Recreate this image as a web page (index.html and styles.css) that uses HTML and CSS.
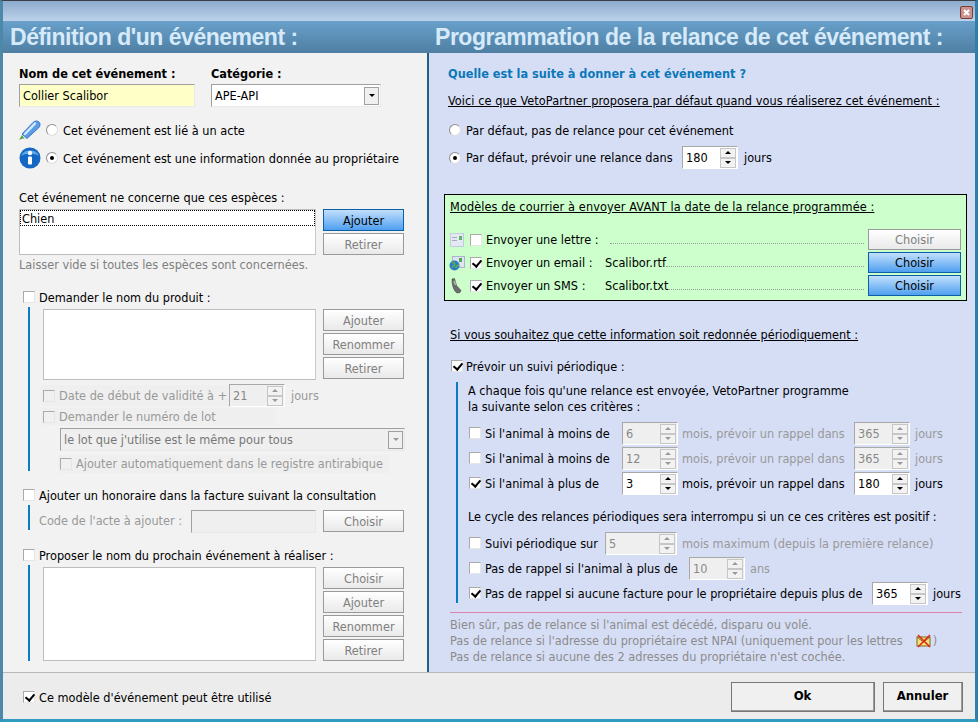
FILE: index.html
```html
<!DOCTYPE html>
<html lang="fr">
<head>
<meta charset="utf-8">
<title>Définition d'un événement</title>
<link rel="stylesheet" href="styles.css">
</head>
<body>
<div class="window">
  <div class="titlebar">
    <button class="close"><svg viewBox="0 0 13 13" width="13" height="13"><rect x=".5" y=".5" width="12" height="12" rx="1.5" fill="#c9938f" stroke="#7d3b38"/><path d="M4 4l5 5M9 4l-5 5" stroke="#fff" stroke-width="2"/></svg></button>
  </div>
  <div class="heads">
    <h1 class="head-left">Définition d'un événement :</h1>
    <h1 class="head-right">Programmation de la relance de cet événement :</h1>
  </div>
  <div class="panels">
    <section class="left">
      <div class="name-grid">
        <div class="field">
          <label class="bold">Nom de cet événement :</label>
          <div class="input yellow">Collier Scalibor</div>
        </div>
        <div class="field">
          <label class="bold">Catégorie :</label>
          <div class="input select">APE-API<span class="drop"><i class="dn"></i></span></div>
        </div>
      </div>

      <div class="row kind first-kind">
        <svg class="kind-icon" viewBox="0 0 22 20"><path d="M0 20l2-1 3-1-2-3-1 2z" fill="#3d9a35"/><path d="M3 14L14 2.500c2-2 4.500-2 6-.5s1.500 4-.5 6L8 18.500z" fill="#5b9ce6" stroke="#2a67b5" stroke-width=".8"/><path d="M6 14L16 3.500" stroke="#d5e9ff" stroke-width="2.500" stroke-linecap="round"/><path d="M3.500 16l2.500 2.500-2.500 .5z" fill="#7cc267"/></svg>
        <span class="radio"></span><span class="txt">Cet événement est lié à un acte</span>
      </div>
      <div class="row kind">
        <svg class="kind-icon" viewBox="0 0 22 22"><circle cx="11" cy="11" r="10.500" fill="#1468c4"/><path d="M2 9a9.500 8 0 0 1 18 0c-4-3-14-3-18 0z" fill="#5aa6ea"/><circle cx="11" cy="6" r="2.200" fill="#fff"/><rect x="9" y="9.500" width="4" height="8" rx="1" fill="#fff"/></svg>
        <span class="radio on"></span><span class="txt">Cet événement est une information donnée au propriétaire</span>
      </div>

      <div class="species-label">Cet événement ne concerne que ces espèces :</div>
      <div class="list-block species">
        <div class="list"><div class="list-item">Chien</div></div>
        <div class="btns">
          <button class="btn blue">Ajouter</button>
          <button class="btn">Retirer</button>
        </div>
      </div>
      <div class="hint">Laisser vide si toutes les espèces sont concernées.</div>

      <div class="row chk section-head demand"><span class="cb"></span><span class="txt">Demander le nom du produit :</span></div>
      <div class="bar bar-product">
        <div class="list-block">
          <div class="list product"></div>
          <div class="btns">
            <button class="btn">Ajouter</button>
            <button class="btn">Renommer</button>
            <button class="btn">Retirer</button>
          </div>
        </div>
        <div class="row date-row">
          <div class="row chk patch date-patch muted"><span class="cb"></span><span>Date de début de validité à +</span></div>
          <div class="spin off"><span class="val">21</span><span class="arrows"><b><i class="up"></i></b><b><i class="dn"></i></b></span></div>
          <span class="muted after">jours</span>
        </div>
        <div class="row chk patch lot-patch muted"><span class="cb"></span><span>Demander le numéro de lot</span></div>
        <div class="input select off lot">le lot que j'utilise est le même pour tous<span class="drop"><i class="dn"></i></span></div>
        <div class="row chk patch auto-patch muted"><span class="cb"></span><span>Ajouter automatiquement dans le registre antirabique</span></div>
      </div>

      <div class="row chk section-head honor"><span class="cb"></span><span class="txt">Ajouter un honoraire dans la facture suivant la consultation</span></div>
      <div class="bar bar-honor">
        <div class="code-row">
          <span class="muted">Code de l'acte à ajouter :</span>
          <div class="input off"></div>
          <button class="btn">Choisir</button>
        </div>
      </div>

      <div class="row chk section-head next"><span class="cb"></span><span class="txt">Proposer le nom du prochain événement à réaliser :</span></div>
      <div class="bar bar-next">
        <div class="list-block">
          <div class="list tall"></div>
          <div class="btns">
            <button class="btn">Choisir</button>
            <button class="btn">Ajouter</button>
            <button class="btn">Renommer</button>
            <button class="btn">Retirer</button>
          </div>
        </div>
      </div>
    </section>

    <section class="right">
      <div class="bold question">Quelle est la suite à donner à cet événement ?</div>
      <div class="under voici">Voici ce que VetoPartner proposera par défaut quand vous réaliserez cet événement :</div>
      <div class="row radio-row r1"><span class="radio"></span><span class="txt">Par défaut, pas de relance pour cet événement</span></div>
      <div class="row radio-row r2">
        <span class="radio on"></span>
        <span class="w-relance">Par défaut, prévoir une relance dans</span>
        <div class="spin"><span class="val">180</span><span class="arrows"><b><i class="up"></i></b><b><i class="dn"></i></b></span></div>
        <span class="r2-after">jours</span>
      </div>

      <div class="green">
        <div class="under green-title">Modèles de courrier à envoyer AVANT la date de la relance programmée :</div>
        <div class="mail-rows">
          <div class="mail">
            <svg class="mail-icon" viewBox="0 0 16 16"><rect x="1.500" y="1.500" width="13" height="13" fill="#e4e8f2" stroke="#c3cbdc"/><rect x="3" y="5" width="5" height="1" fill="#aab"/><rect x="3" y="8" width="5" height="1" fill="#aab"/><rect x="10" y="4" width="3" height="4" fill="#5db56a"/></svg>
            <span class="cb"></span>
            <span class="mail-label">Envoyer une lettre :</span>
            <span class="file"></span><span class="leader"></span>
            <button class="btn small">Choisir</button>
          </div>
          <div class="mail">
            <svg class="mail-icon" viewBox="0 0 16 16"><rect x="3.500" y="1.500" width="12" height="11" fill="#dfe4ef" stroke="#aab4ca"/><rect x="10" y="3" width="3" height="4" fill="#4aa85a"/><circle cx="5.500" cy="10.500" r="5" fill="#2d7cc4"/><path d="M3 7.500c2 0 3 1 2.500 2.500s-2 1-2.500 2.500M7 13c0-2 1-2.500 3-3" stroke="#5cb04c" stroke-width="1.600" fill="none"/></svg>
            <span class="cb on"></span>
            <span class="mail-label">Envoyer un email :</span>
            <span class="file">Scalibor.rtf</span><span class="leader"></span>
            <button class="btn small blue">Choisir</button>
          </div>
          <div class="mail">
            <svg class="mail-icon" viewBox="0 0 16 16"><path d="M3 1l2.500-.5 2 7 4.500 5-1 2-3 .5C5 13 3 8 3 1z" fill="#6d6d6d" stroke="#444" stroke-width=".6"/><path d="M4.500 3l1.500-.3 1 4-1.200.5z" fill="#b9c4b8"/></svg>
            <span class="cb on"></span>
            <span class="mail-label">Envoyer un SMS :</span>
            <span class="file">Scalibor.txt</span><span class="leader"></span>
            <button class="btn small blue">Choisir</button>
          </div>
        </div>
      </div>

      <div class="under souhait">Si vous souhaitez que cette information soit redonnée périodiquement :</div>
      <div class="row suivi"><span class="cb on"></span><span class="txt">Prévoir un suivi périodique :</span></div>

      <div class="bar bar-suivi">
        <p class="para">A chaque fois qu'une relance est envoyée, VetoPartner programme<br>la suivante selon ces critères :</p>
        <div class="crit-rows">
          <div class="crit">
            <span class="cb"></span><span class="w-age">Si l'animal à moins de</span>
            <div class="spin off"><span class="val">6</span><span class="arrows"><b><i class="up"></i></b><b><i class="dn"></i></b></span></div>
            <span class="muted w-mois">mois, prévoir un rappel dans</span>
            <div class="spin off"><span class="val">365</span><span class="arrows"><b><i class="up"></i></b><b><i class="dn"></i></b></span></div>
            <span class="muted">jours</span>
          </div>
          <div class="crit">
            <span class="cb"></span><span class="w-age">Si l'animal à moins de</span>
            <div class="spin off"><span class="val">12</span><span class="arrows"><b><i class="up"></i></b><b><i class="dn"></i></b></span></div>
            <span class="muted w-mois">mois, prévoir un rappel dans</span>
            <div class="spin off"><span class="val">365</span><span class="arrows"><b><i class="up"></i></b><b><i class="dn"></i></b></span></div>
            <span class="muted">jours</span>
          </div>
          <div class="crit">
            <span class="cb on"></span><span class="w-age">Si l'animal à plus de</span>
            <div class="spin"><span class="val">3</span><span class="arrows"><b><i class="up"></i></b><b><i class="dn"></i></b></span></div>
            <span class="w-mois">mois, prévoir un rappel dans</span>
            <div class="spin"><span class="val">180</span><span class="arrows"><b><i class="up"></i></b><b><i class="dn"></i></b></span></div>
            <span>jours</span>
          </div>
        </div>
        <p class="para cycle">Le cycle des relances périodiques sera interrompu si un ce ces critères est positif :</p>
        <div class="crit-rows">
          <div class="crit">
            <span class="cb"></span><span class="w-suivi">Suivi périodique sur</span>
            <div class="spin off wide"><span class="val">5</span><span class="arrows"><b><i class="up"></i></b><b><i class="dn"></i></b></span></div>
            <span class="muted">mois maximum (depuis la première relance)</span>
          </div>
          <div class="crit">
            <span class="cb"></span><span class="w-pas">Pas de rappel si l'animal à plus de</span>
            <div class="spin off"><span class="val">10</span><span class="arrows"><b><i class="up"></i></b><b><i class="dn"></i></b></span></div>
            <span class="muted ans">ans</span>
          </div>
          <div class="crit">
            <span class="cb on"></span><span class="w-fact">Pas de rappel si aucune facture pour le propriétaire depuis plus de</span>
            <div class="spin"><span class="val">365</span><span class="arrows"><b><i class="up"></i></b><b><i class="dn"></i></b></span></div>
            <span>jours</span>
          </div>
        </div>
      </div>

      <div class="pink"></div>
      <div class="notes">
        <div>Bien sûr, pas de relance si l'animal est décédé, disparu ou volé.</div>
        <div class="row">Pas de relance si l'adresse du propriétaire est NPAI (uniquement pour les lettres
          <svg class="npai" viewBox="0 0 16 14"><rect x="1" y="3" width="13" height="9" fill="#f6e27a" stroke="#7a6a20"/><path d="M1 3l6.500 5L14 3" fill="none" stroke="#7a6a20"/><path d="M2 1l12 12M14 1L2 13" stroke="#e0201a" stroke-width="1.500"/></svg>)
        </div>
        <div>Pas de relance si aucune des 2 adresses du propriétaire n'est cochée.</div>
      </div>
    </section>
  </div>
  <footer class="foot">
    <div class="row chk foot-check"><span class="cb on"></span><span class="txt">Ce modèle d'événement peut être utilisé</span></div>
    <div class="foot-btns">
      <button class="big ok">Ok</button>
      <button class="big cancel">Annuler</button>
    </div>
  </footer>
</div>
</body>
</html>
```
FILE: styles.css
```css
* { box-sizing: border-box; }
html, body { margin: 0; padding: 0; }
body {
  width: 978px; height: 722px; overflow: hidden;
  font: 12.6px/14px "DejaVu Sans Condensed", "DejaVu Sans", sans-serif;
  font-stretch: condensed;
  color: #000;
  background: #2f7fa8;
}
.window {
  width: 978px; height: 722px;
  display: flex; flex-direction: column;
  border-top: 1px solid #3a3f45;
  border-left: 3px solid #4d88a8;
  border-right: 3px solid #2f7fa8;
  border-bottom: 3px solid #2f9cc0;
  background: #ececec;
  white-space: nowrap;
}
.titlebar {
  height: 20px; flex: none;
  display: flex; justify-content: flex-end; align-items: flex-start;
  padding: 5px 2px 0 0;
  background: linear-gradient(#8dabcc, #bcd2ea);
}
.close { width: 13px; height: 13px; padding: 0; border: 0; background: none; display: block; }
.close svg { display: block; }
.heads {
  height: 32px; flex: none;
  display: grid; grid-template-columns: 432px 1fr;
  background: linear-gradient(#68a0ca, #4f7fa3);
}
.heads h1 {
  margin: 0; font: bold 23px/33px "Liberation Sans", Arial, sans-serif;
  color: #d6eafa;
}
.head-left { padding-left: 7px; letter-spacing: -.48px; }
.head-right { padding-left: 0; letter-spacing: -.46px; }

.panels { flex: 1; display: grid; grid-template-columns: 424px 2px 1fr; min-height: 0; }
.left { background: #f2f2f2; padding: 14px 0 0 16px; grid-column: 1; }
.right { background: #d6def6; padding: 14px 0 0 19px; grid-column: 3; border-left: 0; box-shadow: -2px 0 0 #1f5f88; }

.row { display: flex; align-items: center; }
.bold { font-weight: bold; }
.under { text-decoration: underline; }
.muted { color: #999; }
.txt { padding-top: 2px; }

.name-grid { display: grid; grid-template-columns: 176px 170px; column-gap: 16px; }
.field { display: flex; flex-direction: column; gap: 3px; }
.input {
  height: 23px; padding: 0 3px; line-height: 21px;
  border: 1px solid #fff; border-top-color: #a0a0a0; border-left-color: #a0a0a0;
  border-bottom-color: #e9e9e9; border-right-color: #e9e9e9;
  background: #fff; position: relative;
}
.yellow { background: #ffffc8; }
.select { display: flex; align-items: center; justify-content: space-between; padding-right: 1px; }
.drop {
  width: 15px; height: 18px; display: flex; align-items: center; justify-content: center;
  background: #f0f0f0; border: 1px solid #a0a0a0;
}
.input.off { background: #efefef; color: #777; }
.dn, .up { display: block; width: 0; height: 0; border: 3.5px solid transparent; }
.dn { border-top-color: #000; border-bottom-width: 0; }
.up { border-bottom-color: #000; border-top-width: 0; }
.off .dn { border-top-color: #999; }
.off .up { border-bottom-color: #999; }

.kind { height: 22px; margin-top: 6px; gap: 5px; }
.first-kind { margin-top: 12px; }
.kind-icon { width: 22px; height: 22px; flex: none; }
.radio {
  width: 12px; height: 12px; flex: none; border-radius: 50%;
  background: #fff; border: 1px solid #8e8e8e; border-right-color: #ddd; border-bottom-color: #ddd;
  display: flex; align-items: center; justify-content: center;
}
.radio.on::after { content: ""; width: 4px; height: 4px; border-radius: 50%; background: #000; }

.species-label { margin-top: 22px; }
.list-block { display: flex; gap: 7px; }
.species { margin-top: 4px; }
.list {
  width: 297px; height: 46px; background: #fff;
  border: 1px solid #bdbdbd; border-right-color: #c8c8c8;
}
.product { width: 273px; height: 71px; }
.tall { width: 273px; height: 94px; }
.list-item { height: 16px; line-height: 15px; padding-left: 1px; border: 1px dotted #000; }
.btns { width: 81px; display: flex; flex-direction: column; gap: 2px; }
.btn {
  width: 81px; height: 22px; padding: 1px 0 0; font: inherit; font-stretch: condensed;
  color: #808080; background: linear-gradient(#fff, #e9e9e9); border: 1px solid #9a9a9a;
}
.btn.blue { color: #000; background: linear-gradient(#c2e0fc, #4f9ff0); border-color: #0b5fa5; }
.btn.small { width: 93px; height: 21px; flex: none; }
.hint { margin-top: 3px; color: #808080; }

.chk { gap: 4px; }
.cb {
  width: 12px; height: 12px; flex: none; position: relative; background: #fff;
  border: 1px solid #aaa; border-right-color: #e6e6e6; border-bottom-color: #e6e6e6;
}
.cb.on::after {
  content: ""; position: absolute; left: 3px; top: 0; width: 4px; height: 7px;
  border: solid #000; border-width: 0 2px 2px 0; transform: rotate(40deg);
}
.section-head { margin-left: 4px; height: 14px; }
.demand { margin-top: 18px; }
.honor { margin-top: 17px; }
.next { margin-top: 18px; }
.bar { margin-left: 9px; border-left: 2px solid #0a7cc4; }
.bar-product { margin-top: 3px; height: 164px; padding: 2px 0 0 13px; }
.bar-honor { margin-top: 3px; height: 25px; padding: 5px 0 0 9px; }
.bar-next { margin-top: 3px; height: 96px; padding: 2px 0 0 13px; }

.date-row { margin-top: 4px; height: 23px; }
.patch { background: #efefef; }
.patch .cb { background: #f0f0f0; }
.date-patch { width: 188px; height: 21px; margin-left: -2px; padding-left: 2px; }
.after { margin-left: 6px; }
.lot-patch { width: 235px; height: 17px; margin: 1px 0 0 -2px; padding-left: 2px; }
.lot { width: 345px; margin: 3px 0 0 17px; }
.auto-patch { width: 332px; height: 18px; margin: 4px 0 0 15px; padding-left: 2px; }
.code-row { display: grid; grid-template-columns: 152px 125px 81px; column-gap: 0; align-items: start; }
.code-row .muted { line-height: 22px; }
.code-row .btn { margin-left: 7px; }

/* spinners */
.spin {
  width: 56px; height: 23px; flex: none; display: flex; justify-content: space-between; padding: 0 1px 0 3px;
  background: #fff; line-height: 21px; align-items: center;
  border: 1px solid #a8a8a8; border-right-color: #fff; border-bottom-color: #fff;
}
.spin.off { background: #efefef; color: #888; }
.spin.wide { width: 72px; }
.arrows { width: 16px; height: 20px; display: flex; flex-direction: column; gap: 0; }
.arrows b {
  flex: 1; display: flex; align-items: center; justify-content: center;
  background: #f2f2f2; border: 1px solid #c6c6c6;
}

/* right */
.voici { margin-top: 13px; letter-spacing: .07px; }
.question { color: #0a78b8; }
.radio-row { gap: 5px; margin-left: 1px; }
.r1 { margin-top: 15px; height: 14px; }
.r2 { margin-top: 9px; height: 23px; }
.w-relance { width: 211px; }
.r2-after { margin-left: 1px; }
.green {
  width: 523px; height: 107px; margin: 25px 0 0 -4px; padding: 5px 5px 3px 4px;
  background: #ccffcc; border: 1px solid #000;
}
.green-title { padding-left: 1px; letter-spacing: .1px; }
.mail-rows { margin-top: 14px; display: grid; grid-auto-rows: 23px; }
.mail { display: flex; align-items: center; }
.mail-icon { width: 16px; height: 16px; flex: none; }
.mail .cb { margin: 0 4px 0 5px; }
.mail-label { width: 119px; }
.file { min-width: 5px; }
.leader { flex: 1; margin: 0 4px 0 0; height: 8px; border-bottom: 1px dotted #9a9a9a; }
.souhait { margin: 27px 0 0 2px; }
.suivi { margin: 17px 0 0 3px; gap: 3px; height: 14px; }
.bar-suivi { margin: 9px 0 0 8px; height: 221px; width: 515px; padding: 1px 0 0 10px; }
.para { margin: 0; line-height: 16px; }
.cycle { margin-top: 12px; }
.crit-rows { margin-top: 7px; display: grid; grid-auto-rows: 25px; }
.crit { display: flex; align-items: flex-start; padding-left: 1px; line-height: 23px; }
.crit .cb { margin: 5px 4px 0 0; }
.w-age { width: 137px; }
.w-mois { width: 172px; margin-left: 4px; }
.crit .spin + span:last-child { margin-left: 5px; }
.crit .w-mois + .spin + span { margin-left: 5px; }
.w-suivi { width: 120px; }
.w-pas { width: 204px; }
.crit .ans { margin-left: 7px; }
.w-fact { width: 387px; }
.pink { width: 512px; height: 1px; margin: 9px 0 0 2px; background: #e080b0; }
.notes { margin: 4px 0 0 2px; color: #8c8c8c; line-height: 16px; }
.notes .row { gap: 4px; }
.npai { width: 16px; height: 14px; margin: 0 -3px 0 9px; }

.foot {
  height: 47px; flex: none; display: flex; align-items: center; justify-content: space-between;
  padding: 0 12px 0 20px; background: #ececec; border-top: 1px solid #b8b8b8;
}
.foot-check { height: 14px; margin-top: 2px; }
.foot-btns { display: flex; gap: 8px; margin-top: 1px; }
.big {
  height: 30px; padding: 0; font: bold 13px/14px "DejaVu Sans Condensed", "DejaVu Sans", sans-serif; color: #000;
  background: #f0f0f0; border: 1px solid #9a9a9a; border-top-color: #fff; border-left-color: #fff;
  outline: 1px solid #777; outline-offset: -1px;
  border-right-width: 2px; border-bottom-width: 2px;
}
.ok { width: 144px; }
.cancel { width: 80px; }
```
